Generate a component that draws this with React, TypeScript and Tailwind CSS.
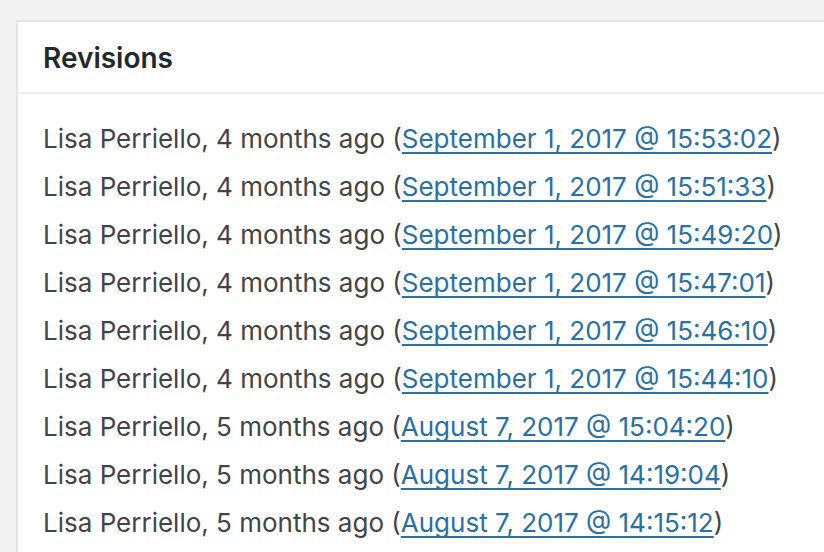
import React from "react";

const rows: [string, string][] = [
  ["4 months ago", "September 1, 2017 @ 15:53:02"],
  ["4 months ago", "September 1, 2017 @ 15:51:33"],
  ["4 months ago", "September 1, 2017 @ 15:49:20"],
  ["4 months ago", "September 1, 2017 @ 15:47:01"],
  ["4 months ago", "September 1, 2017 @ 15:46:10"],
  ["4 months ago", "September 1, 2017 @ 15:44:10"],
  ["5 months ago", "August 7, 2017 @ 15:04:20"],
  ["5 months ago", "August 7, 2017 @ 14:19:04"],
  ["5 months ago", "August 7, 2017 @ 14:15:12"],
];

export default function App() {
  return (
    <div
      className="w-[824px] h-[552px] overflow-hidden bg-[#f3f3f3] pt-[20px] pl-[16px]"
      style={{ fontFamily: "Inter, 'Noto Sans', sans-serif" }}
    >
      <div className="w-[900px] h-[600px] bg-white border-l-2 border-t-2 border-[#e5e5e5]">
        <div className="h-[72px] border-b-2 border-[#eeeeee] pl-[25px] pt-[2px] flex items-center">
          <h2 className="text-[28px] font-semibold text-[#23282d] leading-none">Revisions</h2>
        </div>
        <ul className="pl-[25px] pt-[21px]">
          {rows.map(([ago, date], i) => (
            <li key={i} className="text-[26px] leading-[48px] text-[#444444] whitespace-nowrap">
              Lisa Perriello, {ago} (
              <a
                href="#"
                className="text-[#2a70a0] underline decoration-2 underline-offset-[4px] [text-decoration-skip-ink:none]"
              >
                {date}
              </a>
              )
            </li>
          ))}
        </ul>
      </div>
    </div>
  );
}
